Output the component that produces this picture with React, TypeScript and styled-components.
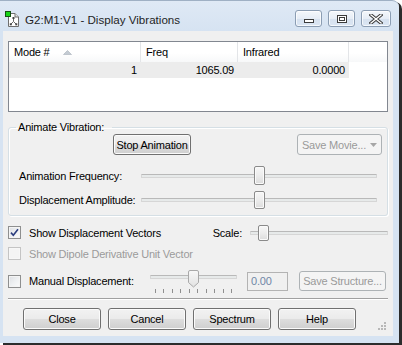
import React from 'react'
import styled, { createGlobalStyle } from 'styled-components'

const GlobalStyle = createGlobalStyle`
  html, body {
    margin: 0;
    padding: 0;
    background: #ffffff;
  }

  body {
    font-family: 'Liberation Sans', Arial, sans-serif;
    font-size: 11px;
    letter-spacing: -0.2px;
    color: #000;
  }

  * {
    box-sizing: border-box;
  }
`

const Screen = styled.div`
  width: 402px;
  height: 345px;
  overflow: hidden;
  background: #ffffff;
`

const Window = styled.div`
  width: 399px;
  height: 343px;

  display: flex;
  flex-direction: column;

  background: linear-gradient(180deg, #dfe9f5 0px, #d6e3f2 30px, #d6e3f2 100%);
  border-top: 1px solid #9fb0c4;
  border-top-right-radius: 7px;
  box-shadow: 3px 2px 0 #2c2c2c;
`

const TitleBar = styled.div`
  height: 30px;
  flex: none;

  display: flex;
  align-items: flex-start;

  padding-top: 9px;
  padding-left: 5px;
  padding-right: 8px;
`

const AppIcon = styled.svg`
  margin-top: 1px;
  flex: none;
`

const Title = styled.div`
  margin-top: 2px;
  margin-left: 5px;

  line-height: 16px;
  font-size: 11.6px;
  letter-spacing: 0;
  color: #1f1f1f;
`

const CaptionGroup = styled.div`
  margin-left: auto;
  display: flex;
  gap: 6px;
`

const CaptionButton = styled.div<{ $w: number }>`
  width: ${p => p.$w}px;
  height: 17px;

  display: flex;
  align-items: center;
  justify-content: center;

  border: 1px solid #8b9db3;
  border-radius: 3px;
  background: linear-gradient(180deg, #f4f7fb 0%, #e6edf6 50%, #d6e1ef 51%, #dbe6f3 100%);
  box-shadow: inset 0 0 0 1px rgba(255, 255, 255, 0.7);
`

const Client = styled.div`
  flex: 1;
  margin: 0 6px 7px 3px;
  padding: 10px 5px 0 5px;

  display: flex;
  flex-direction: column;

  background: #f0f0f0;
`

const ListView = styled.div`
  height: 71px;
  flex: none;

  display: flex;
  flex-direction: column;

  border: 1px solid #828790;
  background: #ffffff;
`

const HeaderRow = styled.div`
  height: 20px;
  display: flex;
  background: linear-gradient(180deg, #ffffff 0%, #ffffff 55%, #f7f8f9 100%);
`

const HeaderCell = styled.div<{ $w?: number }>`
  width: ${p => (p.$w ? `${p.$w}px` : 'auto')};
  flex: ${p => (p.$w ? 'none' : '1')};

  display: flex;
  align-items: center;

  padding-left: 5px;
  border-right: ${p => (p.$w ? '1px solid #e3e5e8' : 'none')};
`

const SortArrow = styled.svg`
  margin-left: 13px;
`

const DataRow = styled.div`
  height: 16px;
  width: 340px;

  display: flex;

  background: #ececec;
`

const DataCell = styled.div<{ $w: number }>`
  width: ${p => p.$w}px;
  flex: none;

  line-height: 16px;
  text-align: right;
  padding-right: 4px;
`

const GroupBox = styled.fieldset`
  margin: 8px 0 0 0;
  padding: 0 5px 6px 10px;
  min-width: 0;

  border: 1px solid #d5dfe5;
  border-radius: 3px;
  box-shadow: inset 1px 1px 0 #ffffff, 1px 1px 0 #ffffff;
`

const GroupLegend = styled.legend`
  margin-left: -3px;
  padding: 0 8px 0 2px;
  line-height: 14px;
`

const ActionRow = styled.div`
  display: flex;
  padding-left: 94px;
`

const PushButton = styled.button<{ $w: number; $h?: number }>`
  width: ${p => p.$w}px;
  height: ${p => p.$h || 21}px;
  flex: none;
  margin: 0;
  padding: 0;

  display: flex;
  align-items: center;
  justify-content: center;
  gap: 4px;

  font: inherit;
  letter-spacing: inherit;
  color: #000;

  border: 1px solid #707070;
  border-radius: 3px;
  background: linear-gradient(180deg, #f2f2f2 0%, #ebebeb 48%, #dddddd 52%, #cfcfcf 100%);
  box-shadow: inset 0 0 0 1px #fbfbfb;

  &:disabled {
    color: #9a9a9a;
    border-color: #adb2b5;
    background: #f4f4f4;
    box-shadow: none;
  }
`

const DropButton = styled(PushButton)`
  margin-left: auto;
`

const SliderRow = styled.div<{ $gap: number }>`
  margin-top: ${p => p.$gap}px;
  display: flex;
  align-items: center;
`

const SliderLabel = styled.div`
  width: 122px;
  flex: none;
`

const SliderBox = styled.div<{ $w: number; $h: number }>`
  position: relative;
  width: ${p => p.$w}px;
  height: ${p => p.$h}px;
  flex: none;

  display: flex;
  flex-direction: column;
  justify-content: center;
`

const Track = styled.div`
  height: 4px;
  border: 1px solid #d6d6d6;
  border-top-color: #b9b9b9;
  border-radius: 1px;
  background: #e7eaea;
`

const Thumb = styled.div<{ $h: number }>`
  position: absolute;
  top: 0;
  width: 11px;
  height: ${p => p.$h}px;

  border: 1px solid #8a8a8a;
  border-radius: 2px;
  background: linear-gradient(180deg, #f7f7f7 0%, #ececec 50%, #dcdcdc 100%);
  box-shadow: inset 0 0 0 1px #fafafa;
`

const PointerSliderBox = styled.div`
  position: relative;
  width: 87px;
  height: 24px;
  flex: none;

  display: flex;
  flex-direction: column;

  padding-top: 6px;
`

const PointerThumb = styled.svg`
  position: absolute;
  top: 1px;
`

const Ticks = styled.div`
  margin-top: 10px;
  padding: 0 5px;
  height: 4px;

  display: flex;
  justify-content: space-between;
`

const Tick = styled.span`
  width: 1px;
  height: 4px;
  background: #8f8f8f;
`

const CheckRow = styled.div<{ $h: number; $top: number }>`
  height: ${p => p.$h}px;
  margin-top: ${p => p.$top}px;
  flex: none;

  display: flex;
  align-items: center;
`

const CheckBox = styled.span<{ $disabled?: boolean }>`
  width: 13px;
  height: 13px;
  flex: none;

  display: flex;
  align-items: center;
  justify-content: center;

  border: 1px solid ${p => (p.$disabled ? '#c4c4c4' : '#8e8f8f')};
  background: ${p => (p.$disabled
    ? '#f4f4f4'
    : 'linear-gradient(135deg, #dcdee2 0%, #eef0f2 50%, #fbfbfb 100%)')};
  box-shadow: inset 0 0 0 1px ${p => (p.$disabled ? '#f7f7f7' : '#f4f4f4')};
`

const CheckLabel = styled.span<{ $disabled?: boolean; $w?: number }>`
  margin-left: 8px;
  width: ${p => (p.$w ? `${p.$w}px` : 'auto')};
  flex: none;
  color: ${p => (p.$disabled ? '#9b9b9b' : '#000')};
`

const ScaleLabel = styled.span`
  margin-left: auto;
  margin-right: 8px;
`

const TextField = styled.div`
  width: 41px;
  height: 19px;
  margin-left: 10px;
  flex: none;

  padding-left: 3px;
  line-height: 17px;

  border: 1px solid #b3b3b3;
  background: #f0f0f0;
  color: #6f86a6;
`

const SideButton = styled(PushButton)`
  margin-left: 11px;
`

const Separator = styled.div`
  margin-top: 5px;
  height: 2px;
  flex: none;

  border-top: 1px solid #a0a0a0;
  border-bottom: 1px solid #ffffff;
`

const Footer = styled.div`
  margin-top: 8px;
  padding-left: 15px;

  display: flex;
  gap: 7px;
`

const Grip = styled.svg`
  margin-left: auto;
  margin-right: 2px;
  align-self: flex-end;
  margin-bottom: -1px;
`

const Check = () => (
  <svg width="9" height="9" viewBox="0 0 9 9">
    <path d="M1 4.6 L3.3 7.2 L8 1.2" fill="none" stroke="#2b3d7e" strokeWidth="1.6" />
  </svg>
)

interface SliderProps {
  width: number
  height: number
  value: number
}

const Slider: React.FC<SliderProps> = ({ width, height, value }) => (
  <SliderBox $w={width} $h={height}>
    <Track />
    <Thumb $h={height} style={{ left: Math.round(value * (width - 11)) }} />
  </SliderBox>
)

const PointerSlider: React.FC<{ value: number }> = ({ value }) => (
  <PointerSliderBox>
    <Track />
    <PointerThumb width="11" height="18" viewBox="0 0 11 18" style={{ left: Math.round(value * 76) }}>
      <defs>
        <linearGradient id="pt" x1="0" y1="0" x2="0" y2="1">
          <stop offset="0" stopColor="#f8f8f8" />
          <stop offset="1" stopColor="#e2e2e2" />
        </linearGradient>
      </defs>
      <path d="M0.5 2 Q0.5 0.5 2 0.5 H9 Q10.5 0.5 10.5 2 V12.5 L5.5 17 L0.5 12.5 Z" fill="url(#pt)" stroke="#a9a9a9" />
    </PointerThumb>
    <Ticks>
      {Array.from({ length: 10 }).map((_, i) => <Tick key={i} />)}
    </Ticks>
  </PointerSliderBox>
)

export default function App() {
  return (
    <Screen>
      <GlobalStyle />
      <Window>
        <TitleBar>
          <AppIcon width="15" height="16" viewBox="0 0 15 16">
            <path d="M3.5 2.5 H10 L13.5 6 V15.5 H3.5 Z" fill="#ffffff" stroke="#6e6e6e" />
            <path d="M10 2.5 V6 H13.5" fill="#e4e4e4" stroke="#6e6e6e" />
            <g stroke="#6a6a6a" strokeWidth="1">
              <line x1="8.5" y1="7" x2="8.5" y2="10.5" />
              <line x1="8.5" y1="10.5" x2="5.8" y2="13.2" />
              <line x1="8.5" y1="10.5" x2="11.2" y2="13.2" />
            </g>
            <rect x="7.5" y="6" width="2" height="2" fill="#444" />
            <rect x="4.8" y="12.3" width="2" height="2" fill="#444" />
            <rect x="10.3" y="12.3" width="2" height="2" fill="#444" />
            <rect x="0.5" y="0.5" width="5" height="5" fill="#17d417" stroke="#145214" />
          </AppIcon>
          <Title>G2:M1:V1 - Display Vibrations</Title>
          <CaptionGroup>
            <CaptionButton $w={27}>
              <svg width="12" height="10" viewBox="0 0 12 10">
                <rect x="1.5" y="5.5" width="9" height="3" fill="#ffffff" stroke="#3c3c3c" />
              </svg>
            </CaptionButton>
            <CaptionButton $w={27}>
              <svg width="12" height="10" viewBox="0 0 12 10">
                <rect x="1.5" y="1.5" width="9" height="7" fill="#ffffff" stroke="#3c3c3c" />
                <rect x="3.5" y="3.5" width="5" height="3" fill="#ffffff" stroke="#3c3c3c" />
              </svg>
            </CaptionButton>
            <CaptionButton $w={30}>
              <svg width="14" height="10" viewBox="0 0 14 10">
                <path d="M2 1 L12 9 M12 1 L2 9" stroke="#3c3c3c" strokeWidth="3.4" strokeLinecap="square" />
                <path d="M2 1 L12 9 M12 1 L2 9" stroke="#ffffff" strokeWidth="1.4" strokeLinecap="square" />
              </svg>
            </CaptionButton>
          </CaptionGroup>
        </TitleBar>

        <Client>
          <ListView>
            <HeaderRow>
              <HeaderCell $w={132}>
                Mode #
                <SortArrow width="9" height="5" viewBox="0 0 9 5">
                  <path d="M0.5 4.5 L4.5 0.5 L8.5 4.5 Z" fill="#c4cbd3" stroke="#a7b0ba" strokeWidth="0.6" />
                </SortArrow>
              </HeaderCell>
              <HeaderCell $w={97}>Freq</HeaderCell>
              <HeaderCell $w={111}>Infrared</HeaderCell>
              <HeaderCell />
            </HeaderRow>
            <DataRow>
              <DataCell $w={132}>1</DataCell>
              <DataCell $w={97}>1065.09</DataCell>
              <DataCell $w={111}>0.0000</DataCell>
            </DataRow>
          </ListView>

          <GroupBox>
            <GroupLegend>Animate Vibration:</GroupLegend>
            <ActionRow>
              <PushButton $w={78}>Stop Animation</PushButton>
              <DropButton $w={85} disabled>
                Save Movie...
                <svg width="7" height="4" viewBox="0 0 7 4">
                  <path d="M0 0 H7 L3.5 4 Z" fill="#a6a6a6" />
                </svg>
              </DropButton>
            </ActionRow>
            <SliderRow $gap={11}>
              <SliderLabel>Animation Frequency:</SliderLabel>
              <Slider width={236} height={19} value={0.5} />
            </SliderRow>
            <SliderRow $gap={6}>
              <SliderLabel>Displacement Amplitude:</SliderLabel>
              <Slider width={236} height={18} value={0.5} />
            </SliderRow>
          </GroupBox>

          <CheckRow $h={21} $top={6}>
            <CheckBox><Check /></CheckBox>
            <CheckLabel>Show Displacement Vectors</CheckLabel>
            <ScaleLabel>Scale:</ScaleLabel>
            <Slider width={138} height={16} value={0.06} />
          </CheckRow>

          <CheckRow $h={21} $top={0}>
            <CheckBox $disabled />
            <CheckLabel $disabled>Show Dipole Derivative Unit Vector</CheckLabel>
          </CheckRow>

          <CheckRow $h={24} $top={5}>
            <CheckBox />
            <CheckLabel $w={121}>Manual Displacement:</CheckLabel>
            <PointerSlider value={0.5} />
            <TextField>0.00</TextField>
            <SideButton $w={87} $h={20} disabled>Save Structure...</SideButton>
          </CheckRow>

          <Separator />

          <Footer>
            <PushButton $w={78} $h={22}>Close</PushButton>
            <PushButton $w={78} $h={22}>Cancel</PushButton>
            <PushButton $w={78} $h={22}>Spectrum</PushButton>
            <PushButton $w={78} $h={22}>Help</PushButton>
            <Grip width="10" height="10" viewBox="0 0 10 10">
              <g fill="#b8b8b8">
                <rect x="8" y="1" width="2" height="2" />
                <rect x="5" y="4" width="2" height="2" />
                <rect x="8" y="4" width="2" height="2" />
                <rect x="2" y="7" width="2" height="2" />
                <rect x="5" y="7" width="2" height="2" />
                <rect x="8" y="7" width="2" height="2" />
              </g>
            </Grip>
          </Footer>
        </Client>
      </Window>
    </Screen>
  )
}
